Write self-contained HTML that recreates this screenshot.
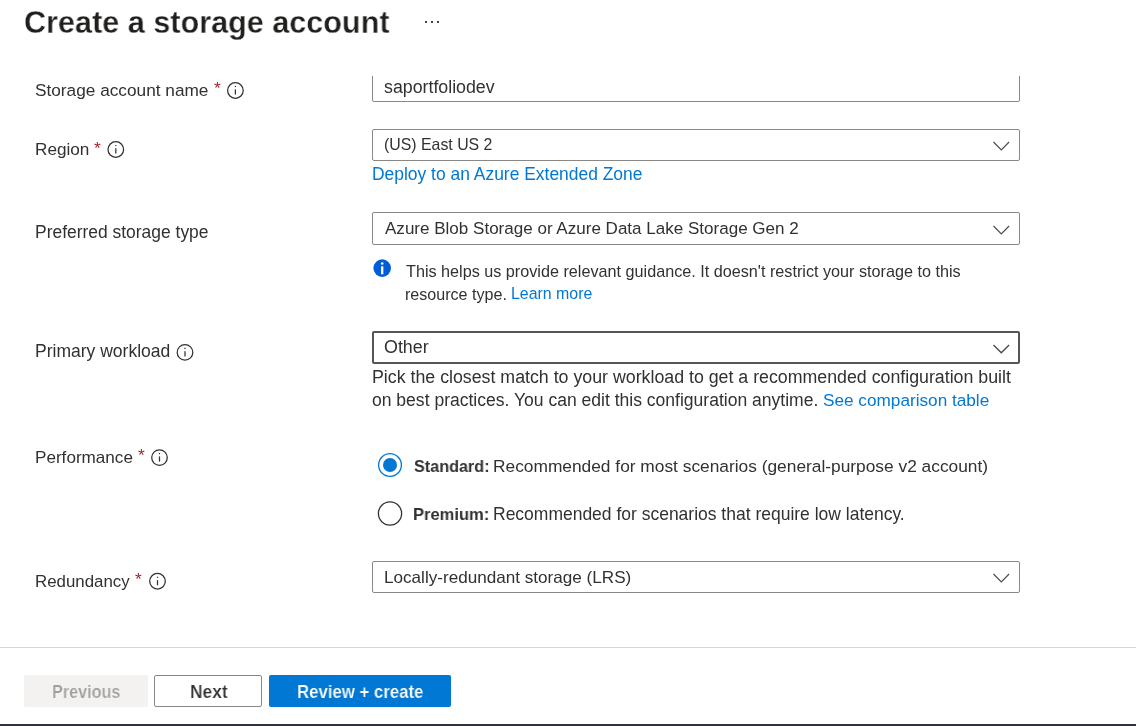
<!DOCTYPE html>
<html><head><meta charset="utf-8">
<style>
html,body{margin:0;padding:0;background:#fff;}
body{width:1136px;height:726px;position:relative;overflow:hidden;font-family:"Liberation Sans",sans-serif;color:#323130;-webkit-font-smoothing:antialiased;}
.t{position:absolute;white-space:nowrap;line-height:20px;font-size:17.3px;will-change:transform;}
.s16{font-size:16.1px;line-height:18px;}
.lk{color:#0078d4;}
.req{color:#a4262c;}
.box{position:absolute;box-sizing:border-box;border:1px solid #8a8886;border-radius:2px;background:#fff;}
svg{position:absolute;overflow:visible;left:0;top:0;}
.btn{position:absolute;box-sizing:border-box;border-radius:2px;top:675px;height:32px;}
</style></head><body>

<!-- Title -->
<div class="t" style="left:24px;top:5px;font-size:32px;line-height:34px;font-weight:bold;color:#201f1e;transform:scaleX(0.956);transform-origin:0 0;-webkit-text-stroke:0.3px #fff">Create a storage account</div>
<div style="position:absolute;left:425px;top:21px;width:2px;height:2px;background:#444"></div>
<div style="position:absolute;left:431px;top:21px;width:2px;height:2px;background:#444"></div>
<div style="position:absolute;left:437px;top:21px;width:2px;height:2px;background:#444"></div>

<!-- Row 1: Storage account name -->
<div class="t" style="left:35.2px;top:80px;font-size:17.24px">Storage account name</div>
<div class="t req" style="left:213.5px;top:78px">*</div>
<svg width="1" height="1"><g transform="translate(235.4,90.5)" fill="none" stroke="#323130" stroke-width="1.25"><circle r="7.8"/><line x1="0" y1="-1.2" x2="0" y2="4"/><line x1="0" y1="-4.6" x2="0" y2="-3.4"/></g></svg>
<div class="box" style="left:372px;top:70px;width:648px;height:32px;clip-path:inset(6px 0 0 0)"></div>
<div class="t" style="left:384.4px;top:77px;font-size:17.77px">saportfoliodev</div>

<!-- Row 2: Region -->
<div class="t" style="left:35.1px;top:139px;font-size:17.18px">Region</div>
<div class="t req" style="left:94px;top:138px">*</div>
<svg width="1" height="1"><g transform="translate(115.8,149.5)" fill="none" stroke="#323130" stroke-width="1.25"><circle r="7.8"/><line x1="0" y1="-1.2" x2="0" y2="4"/><line x1="0" y1="-4.6" x2="0" y2="-3.4"/></g></svg>
<div class="box" style="left:372px;top:129px;width:648px;height:32px;"></div>
<div class="t" style="left:383.8px;top:135px;font-size:15.86px">(US) East US 2</div>
<svg width="1" height="1"><polyline points="993.5,142 1001.3,149.8 1009.1,142" fill="none" stroke="#4f4d4b" stroke-width="1.2"/></svg>
<div class="t lk" style="left:372.3px;top:164px;font-size:17.46px">Deploy to an Azure Extended Zone</div>

<!-- Row 3: Preferred storage type -->
<div class="t" style="left:35px;top:222px;font-size:17.44px">Preferred storage type</div>
<div class="box" style="left:372px;top:212px;width:648px;height:33px;"></div>
<div class="t" style="left:384.5px;top:219px;font-size:17.05px">Azure Blob Storage or Azure Data Lake Storage Gen 2</div>
<svg width="1" height="1"><polyline points="993.5,226 1001.3,233.8 1009.1,226" fill="none" stroke="#4f4d4b" stroke-width="1.2"/></svg>
<svg width="1" height="1"><g transform="translate(382.2,268.1)"><circle r="8.8" fill="#015cda"/><rect x="-1.15" y="-1.8" width="2.3" height="8" fill="#fff"/><circle cx="0" cy="-4.6" r="1.3" fill="#fff"/></g></svg>
<div class="t s16" style="left:406px;top:262px;font-size:16.19px">This helps us provide relevant guidance. It doesn't restrict your storage to this</div>
<div class="t s16" style="left:405px;top:285px;font-size:16.08px">resource type.</div>
<div class="t s16 lk" style="left:511.4px;top:285px;font-size:15.91px">Learn more</div>

<!-- Row 4: Primary workload -->
<div class="t" style="left:35px;top:341px;font-size:17.53px">Primary workload</div>
<svg width="1" height="1"><g transform="translate(185,352.4)" fill="none" stroke="#323130" stroke-width="1.25"><circle r="7.8"/><line x1="0" y1="-1.2" x2="0" y2="4"/><line x1="0" y1="-4.6" x2="0" y2="-3.4"/></g></svg>
<div class="box" style="left:372px;top:331px;width:648px;height:33px;border:2px solid #575553;border-radius:2px"></div>
<div class="t" style="left:383.9px;top:337px;font-size:17.85px">Other</div>
<svg width="1" height="1"><polyline points="993.5,345 1001.3,352.8 1009.1,345" fill="none" stroke="#4a4847" stroke-width="1.3"/></svg>
<div class="t" style="left:371.6px;top:367px;font-size:17.78px">Pick the closest match to your workload to get a recommended configuration built</div>
<div class="t" style="left:372.3px;top:390px;font-size:17.54px">on best practices. You can edit this configuration anytime.</div>
<div class="t lk" style="left:822.9px;top:390px;font-size:17.2px">See comparison table</div>

<!-- Row 5: Performance -->
<div class="t" style="left:35.2px;top:448px;font-size:17.13px">Performance</div>
<div class="t req" style="left:138px;top:445px">*</div>
<svg width="1" height="1"><g transform="translate(159.5,457.6)" fill="none" stroke="#323130" stroke-width="1.25"><circle r="7.8"/><line x1="0" y1="-1.2" x2="0" y2="4"/><line x1="0" y1="-4.6" x2="0" y2="-3.4"/></g></svg>
<svg width="1" height="1"><g transform="translate(390,465)"><circle r="11.4" fill="#fff" stroke="#0078d4" stroke-width="1.3"/><circle r="7" fill="#0078d4"/></g></svg>
<div class="t" style="left:413.5px;top:456px;font-size:17.3px;font-weight:bold;transform:scaleX(0.937);transform-origin:0 0">Standard:</div>
<div class="t" style="left:493.4px;top:456px;font-size:17.34px">Recommended for most scenarios (general-purpose v2 account)</div>
<svg width="1" height="1"><g transform="translate(390,513.5)"><circle r="11.6" fill="#fff" stroke="#323130" stroke-width="1.3"/></g></svg>
<div class="t" style="left:412.8px;top:504px;font-size:17.3px;font-weight:bold;transform:scaleX(0.957);transform-origin:0 0">Premium:</div>
<div class="t" style="left:493.4px;top:504px;font-size:17.49px">Recommended for scenarios that require low latency.</div>

<!-- Row 6: Redundancy -->
<div class="t" style="left:35.2px;top:572px;font-size:16.87px">Redundancy</div>
<div class="t req" style="left:135.2px;top:569px">*</div>
<svg width="1" height="1"><g transform="translate(157.5,581.3)" fill="none" stroke="#323130" stroke-width="1.25"><circle r="7.8"/><line x1="0" y1="-1.2" x2="0" y2="4"/><line x1="0" y1="-4.6" x2="0" y2="-3.4"/></g></svg>
<div class="box" style="left:372px;top:561px;width:648px;height:32px;"></div>
<div class="t" style="left:383.6px;top:568px;font-size:17.12px">Locally-redundant storage (LRS)</div>
<svg width="1" height="1"><polyline points="993.5,574 1001.3,581.8 1009.1,574" fill="none" stroke="#4f4d4b" stroke-width="1.2"/></svg>

<!-- Footer -->
<div style="position:absolute;left:0;top:647px;width:1136px;height:1px;background:#d8d6d4"></div>
<div class="btn" style="left:24px;width:124px;background:#f3f2f1"></div>
<div class="t" style="left:52px;top:682px;font-size:18px;font-weight:bold;color:#a19f9d;transform:scaleX(0.9);transform-origin:0 0;-webkit-text-stroke:0.2px #f3f2f1">Previous</div>
<div class="btn" style="left:154px;width:108px;border:1px solid #8a8886;background:#fff"></div>
<div class="t" style="left:190px;top:682px;font-size:18px;font-weight:bold;color:#323130;transform:scaleX(0.966);transform-origin:0 0;-webkit-text-stroke:0.2px #fff">Next</div>
<div class="btn" style="left:269px;width:182px;background:#0078d4"></div>
<div class="t" style="left:296.8px;top:682px;font-size:18px;font-weight:bold;color:#fff;transform:scaleX(0.933);transform-origin:0 0;-webkit-text-stroke:0.2px #0078d4">Review + create</div>

<div style="position:absolute;left:0;top:724px;width:1136px;height:2px;background:#2f323e"></div>
</body></html>
